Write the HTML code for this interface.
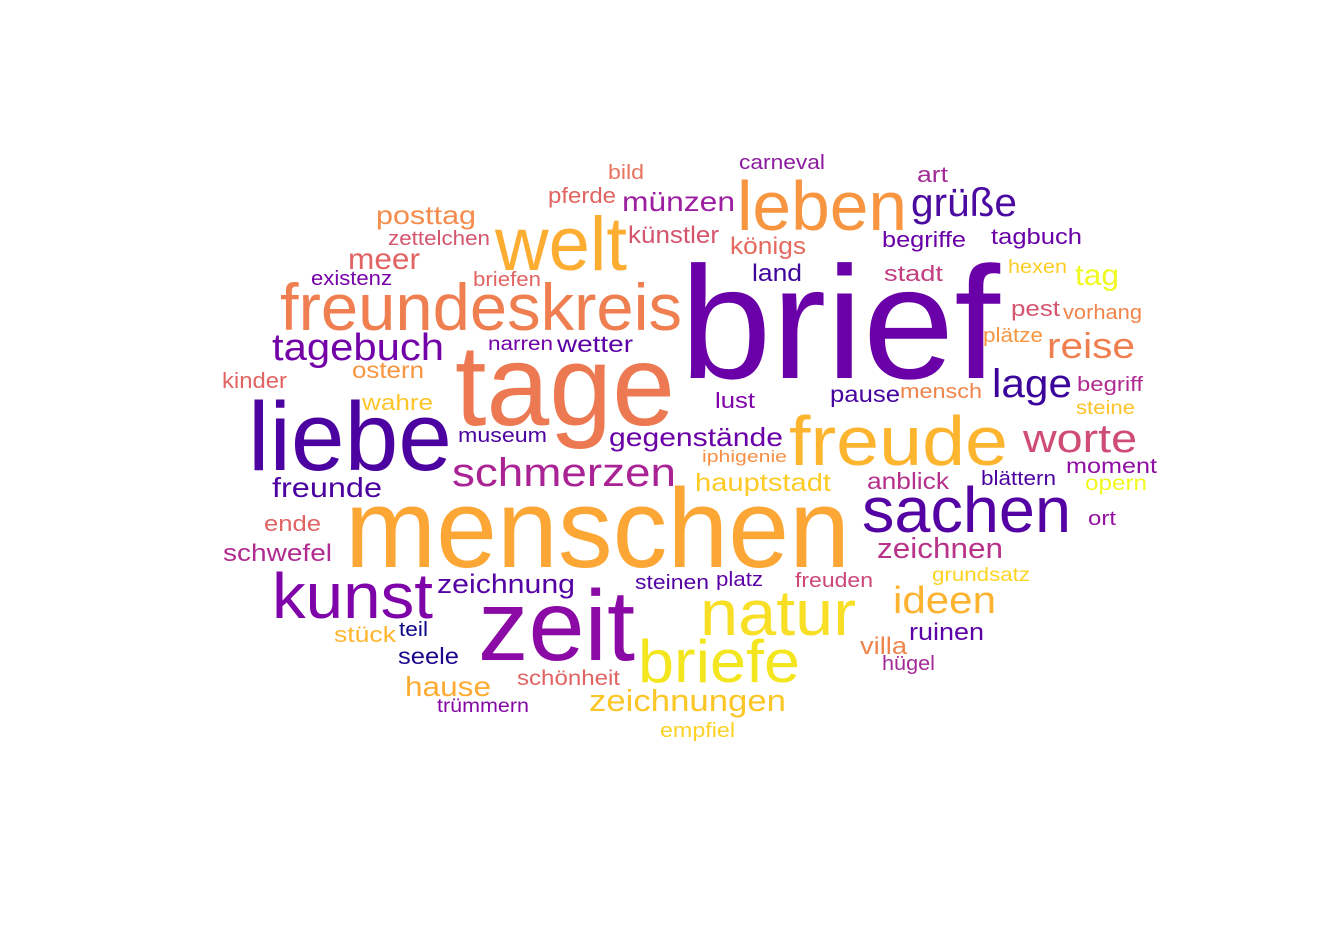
<!DOCTYPE html>
<html><head><meta charset="utf-8"><style>
html,body{margin:0;padding:0;background:#fff;width:1334px;height:945px;overflow:hidden}
svg{display:block}
text{font-family:"Liberation Sans",Arial,sans-serif}
</style></head><body>
<svg width="1334" height="945" viewBox="0 0 1334 945" xmlns="http://www.w3.org/2000/svg">
<g lengthAdjust="spacingAndGlyphs">
<text x="608" y="179" font-size="20" fill="#e8735e" textLength="36" lengthAdjust="spacingAndGlyphs">bild</text>
<text x="739" y="169" font-size="20" fill="#8b1a9e" textLength="86" lengthAdjust="spacingAndGlyphs">carneval</text>
<text x="548" y="203" font-size="22" fill="#e0645f" textLength="68" lengthAdjust="spacingAndGlyphs">pferde</text>
<text x="622" y="211" font-size="28" fill="#9c1fa0" textLength="113" lengthAdjust="spacingAndGlyphs">münzen</text>
<text x="737" y="230" font-size="70" fill="#f89540" textLength="170" lengthAdjust="spacingAndGlyphs">leben</text>
<text x="911" y="216" font-size="40" fill="#4b0ba0" textLength="106" lengthAdjust="spacingAndGlyphs">grüße</text>
<text x="917" y="182" font-size="22" fill="#a22b97" textLength="31" lengthAdjust="spacingAndGlyphs">art</text>
<text x="376" y="224" font-size="26" fill="#f58c4b" textLength="100" lengthAdjust="spacingAndGlyphs">posttag</text>
<text x="388" y="245" font-size="20" fill="#d5546e" textLength="102" lengthAdjust="spacingAndGlyphs">zettelchen</text>
<text x="495" y="270" font-size="76" fill="#fdae32" textLength="132" lengthAdjust="spacingAndGlyphs">welt</text>
<text x="628" y="243" font-size="24" fill="#d5546e" textLength="91" lengthAdjust="spacingAndGlyphs">künstler</text>
<text x="730" y="254" font-size="24" fill="#e6695e" textLength="76" lengthAdjust="spacingAndGlyphs">königs</text>
<text x="882" y="247" font-size="22" fill="#6a00a8" textLength="84" lengthAdjust="spacingAndGlyphs">begriffe</text>
<text x="991" y="244" font-size="22" fill="#6a00a8" textLength="91" lengthAdjust="spacingAndGlyphs">tagbuch</text>
<text x="348" y="269" font-size="30" fill="#e16462" textLength="72" lengthAdjust="spacingAndGlyphs">meer</text>
<text x="311" y="285" font-size="20" fill="#7701a8" textLength="81" lengthAdjust="spacingAndGlyphs">existenz</text>
<text x="473" y="286" font-size="20" fill="#e16462" textLength="68" lengthAdjust="spacingAndGlyphs">briefen</text>
<text x="752" y="281" font-size="24" fill="#3e049c" textLength="50" lengthAdjust="spacingAndGlyphs">land</text>
<text x="884" y="281" font-size="22" fill="#c33d80" textLength="59" lengthAdjust="spacingAndGlyphs">stadt</text>
<text x="1008" y="273" font-size="19" fill="#fcce25" textLength="59" lengthAdjust="spacingAndGlyphs">hexen</text>
<text x="1075" y="285" font-size="30" fill="#f0f921" textLength="44" lengthAdjust="spacingAndGlyphs">tag</text>
<text x="280" y="330" font-size="66" fill="#ef7e50" textLength="402" lengthAdjust="spacingAndGlyphs">freundeskreis</text>
<text x="680" y="378" font-size="160" fill="#6a00a8" textLength="320" lengthAdjust="spacingAndGlyphs">brief</text>
<text x="1011" y="316" font-size="22" fill="#d5546e" textLength="49" lengthAdjust="spacingAndGlyphs">pest</text>
<text x="1063" y="319" font-size="20" fill="#f1844b" textLength="79" lengthAdjust="spacingAndGlyphs">vorhang</text>
<text x="983" y="342" font-size="20" fill="#f89540" textLength="60" lengthAdjust="spacingAndGlyphs">plätze</text>
<text x="1047" y="358" font-size="36" fill="#f07f4f" textLength="88" lengthAdjust="spacingAndGlyphs">reise</text>
<text x="272" y="360" font-size="38" fill="#7201a8" textLength="172" lengthAdjust="spacingAndGlyphs">tagebuch</text>
<text x="488" y="350" font-size="19" fill="#7201a8" textLength="65" lengthAdjust="spacingAndGlyphs">narren</text>
<text x="557" y="352" font-size="23" fill="#5c01a6" textLength="76" lengthAdjust="spacingAndGlyphs">wetter</text>
<text x="352" y="378" font-size="23" fill="#f89540" textLength="72" lengthAdjust="spacingAndGlyphs">ostern</text>
<text x="222" y="388" font-size="22" fill="#e16462" textLength="65" lengthAdjust="spacingAndGlyphs">kinder</text>
<text x="455" y="425" font-size="115" fill="#ed7953" textLength="220" lengthAdjust="spacingAndGlyphs">tage</text>
<text x="992" y="397" font-size="40" fill="#3b049a" textLength="80" lengthAdjust="spacingAndGlyphs">lage</text>
<text x="715" y="408" font-size="22" fill="#7e03a8" textLength="40" lengthAdjust="spacingAndGlyphs">lust</text>
<text x="830" y="402" font-size="23" fill="#46039f" textLength="70" lengthAdjust="spacingAndGlyphs">pause</text>
<text x="900" y="398" font-size="20" fill="#f1844b" textLength="82" lengthAdjust="spacingAndGlyphs">mensch</text>
<text x="1077" y="391" font-size="20" fill="#b12a90" textLength="66" lengthAdjust="spacingAndGlyphs">begriff</text>
<text x="362" y="410" font-size="22" fill="#fdc527" textLength="71" lengthAdjust="spacingAndGlyphs">wahre</text>
<text x="1076" y="414" font-size="19" fill="#fdc328" textLength="59" lengthAdjust="spacingAndGlyphs">steine</text>
<text x="248" y="470" font-size="97" fill="#4c02a1" textLength="204" lengthAdjust="spacingAndGlyphs">liebe</text>
<text x="458" y="442" font-size="20" fill="#4c02a1" textLength="89" lengthAdjust="spacingAndGlyphs">museum</text>
<text x="609" y="446" font-size="26" fill="#6a00a8" textLength="174" lengthAdjust="spacingAndGlyphs">gegenstände</text>
<text x="789" y="465" font-size="70" fill="#fdb42f" textLength="219" lengthAdjust="spacingAndGlyphs">freude</text>
<text x="1023" y="452" font-size="40" fill="#cf4c74" textLength="114" lengthAdjust="spacingAndGlyphs">worte</text>
<text x="702" y="462" font-size="17" fill="#f68f44" textLength="85" lengthAdjust="spacingAndGlyphs">iphigenie</text>
<text x="1066" y="473" font-size="21" fill="#8f0da4" textLength="91" lengthAdjust="spacingAndGlyphs">moment</text>
<text x="452" y="486" font-size="40" fill="#a92395" textLength="224" lengthAdjust="spacingAndGlyphs">schmerzen</text>
<text x="867" y="489" font-size="23" fill="#b52f8c" textLength="82" lengthAdjust="spacingAndGlyphs">anblick</text>
<text x="981" y="485" font-size="20" fill="#4c02a1" textLength="75" lengthAdjust="spacingAndGlyphs">blättern</text>
<text x="1085" y="490" font-size="21" fill="#f0f921" textLength="62" lengthAdjust="spacingAndGlyphs">opern</text>
<text x="272" y="497" font-size="28" fill="#4c02a1" textLength="110" lengthAdjust="spacingAndGlyphs">freunde</text>
<text x="695" y="491" font-size="25" fill="#fdca26" textLength="136" lengthAdjust="spacingAndGlyphs">hauptstadt</text>
<text x="345" y="567" font-size="112" fill="#fca636" textLength="505" lengthAdjust="spacingAndGlyphs">menschen</text>
<text x="862" y="532" font-size="64" fill="#5402a3" textLength="209" lengthAdjust="spacingAndGlyphs">sachen</text>
<text x="1088" y="525" font-size="20" fill="#9511a1" textLength="28" lengthAdjust="spacingAndGlyphs">ort</text>
<text x="264" y="531" font-size="22" fill="#e16462" textLength="57" lengthAdjust="spacingAndGlyphs">ende</text>
<text x="223" y="561" font-size="24" fill="#b12a90" textLength="109" lengthAdjust="spacingAndGlyphs">schwefel</text>
<text x="877" y="558" font-size="29" fill="#b83289" textLength="126" lengthAdjust="spacingAndGlyphs">zeichnen</text>
<text x="272" y="618" font-size="64" fill="#7e03a8" textLength="161" lengthAdjust="spacingAndGlyphs">kunst</text>
<text x="437" y="593" font-size="27" fill="#5402a3" textLength="138" lengthAdjust="spacingAndGlyphs">zeichnung</text>
<text x="635" y="589" font-size="20" fill="#5302a3" textLength="74" lengthAdjust="spacingAndGlyphs">steinen</text>
<text x="716" y="586" font-size="20" fill="#5c01a6" textLength="47" lengthAdjust="spacingAndGlyphs">platz</text>
<text x="795" y="587" font-size="20" fill="#cc4778" textLength="78" lengthAdjust="spacingAndGlyphs">freuden</text>
<text x="932" y="581" font-size="19" fill="#fdd325" textLength="98" lengthAdjust="spacingAndGlyphs">grundsatz</text>
<text x="700" y="635" font-size="64" fill="#f8df25" textLength="156" lengthAdjust="spacingAndGlyphs">natur</text>
<text x="893" y="613" font-size="38" fill="#fdb32f" textLength="103" lengthAdjust="spacingAndGlyphs">ideen</text>
<text x="478" y="660" font-size="100" fill="#8b0aa5" textLength="157" lengthAdjust="spacingAndGlyphs">zeit</text>
<text x="334" y="642" font-size="22" fill="#feb72d" textLength="62" lengthAdjust="spacingAndGlyphs">stück</text>
<text x="399" y="636" font-size="20" fill="#0d0887" textLength="29" lengthAdjust="spacingAndGlyphs">teil</text>
<text x="909" y="640" font-size="24" fill="#5c01a6" textLength="75" lengthAdjust="spacingAndGlyphs">ruinen</text>
<text x="860" y="654" font-size="24" fill="#f1844b" textLength="47" lengthAdjust="spacingAndGlyphs">villa</text>
<text x="398" y="664" font-size="23" fill="#1b068d" textLength="61" lengthAdjust="spacingAndGlyphs">seele</text>
<text x="882" y="670" font-size="20" fill="#a22b97" textLength="53" lengthAdjust="spacingAndGlyphs">hügel</text>
<text x="638" y="682" font-size="60" fill="#f4e61e" textLength="162" lengthAdjust="spacingAndGlyphs">briefe</text>
<text x="517" y="685" font-size="21" fill="#e16462" textLength="103" lengthAdjust="spacingAndGlyphs">schönheit</text>
<text x="405" y="696" font-size="28" fill="#fdab33" textLength="86" lengthAdjust="spacingAndGlyphs">hause</text>
<text x="589" y="711" font-size="31" fill="#fdc627" textLength="197" lengthAdjust="spacingAndGlyphs">zeichnungen</text>
<text x="437" y="712" font-size="19" fill="#8606a6" textLength="92" lengthAdjust="spacingAndGlyphs">trümmern</text>
<text x="660" y="737" font-size="20" fill="#fcd225" textLength="75" lengthAdjust="spacingAndGlyphs">empfiel</text>
</g>
</svg>
</body></html>
